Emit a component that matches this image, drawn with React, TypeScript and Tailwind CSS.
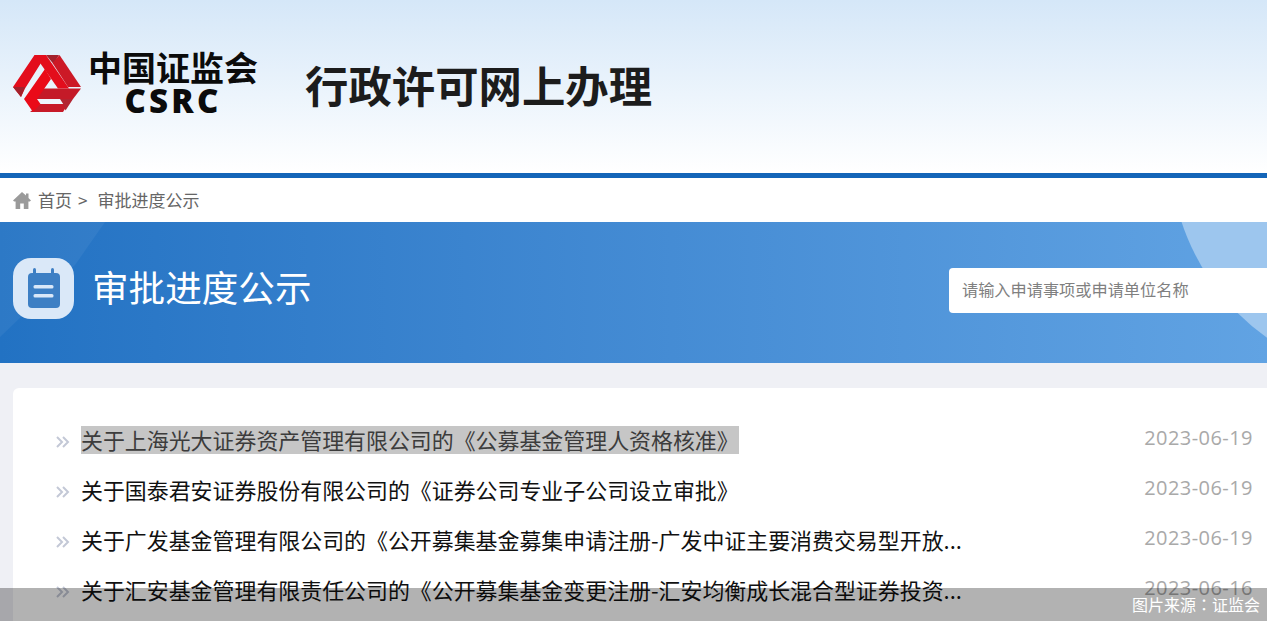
const ROWS = [
  { title: '关于上海光大证券资产管理有限公司的《公募基金管理人资格核准》', date: '2023-06-19', selected: true },
  { title: '关于国泰君安证券股份有限公司的《证券公司专业子公司设立审批》', date: '2023-06-19' },
  { title: '关于广发基金管理有限公司的《公开募集基金募集申请注册-广发中证主要消费交易型开放...', date: '2023-06-19' },
  { title: '关于汇安基金管理有限责任公司的《公开募集基金变更注册-汇安均衡成长混合型证券投资...', date: '2023-06-16' },
]

const CJK = "font-['Microsoft_YaHei','Noto_Sans_CJK_SC',sans-serif]"

function Logo() {
  return (
    <svg width="68" height="59" viewBox="0 0 68 59" className="shrink-0">
      {/* three folded bands, drawn back to front */}
      <path d="M33 1H46L40.5 10Z" fill="#a3212c" />
      <path d="M39.5 9 46.5 1 68 33H55Z" fill="#cc1926" />
      <path d="M25 34.5H68L60 45H20Z" fill="#c41a28" />
      <path d="M27 50H55L50 58H17Z" fill="#c71a28" />
      <path d="M47 45H60L52.5 56.5 50.5 50.5Z" fill="#b32431" />
      <path d="M21.5 1H33L56 34.5H45Z" fill="#e30d1c" />
      <path d="M21.5 1H33L12 34.5 8 43 0 33Z" fill="#e30d1c" />
      <path d="M0 33H12L8 43Z" fill="#a3212c" />
      <path d="M32 15 38 25 24 45 27.5 50 20 58 11 45Z" fill="#ea0a18" />
    </svg>
  )
}

function HomeIcon() {
  return (
    <svg width="18" height="17" viewBox="0 0 18 17" className="shrink-0">
      <path d="M9 0 13 3.6V1.5H15.5V6L18 8.4 16.8 9.6H15.4V17H10.8V11.5H7.2V17H2.6V9.6H1.2L0 8.4Z" fill="#9a9a9a" />
    </svg>
  )
}

function CalendarIcon() {
  return (
    <div className="flex h-[61px] w-[61px] shrink-0 items-center justify-center rounded-[18px] bg-[#dae8f8]">
      <svg width="34" height="40" viewBox="0 0 34 40">
        <rect x="1" y="5" width="32" height="35" rx="4" fill="#3d7fc4" />
        <rect x="6" y="0" width="3" height="9" rx="1.5" fill="#3d7fc4" />
        <rect x="24" y="0" width="3" height="9" rx="1.5" fill="#3d7fc4" />
        <rect x="6.5" y="17" width="20" height="3.5" rx="1.5" fill="#dae8f8" />
        <rect x="6.5" y="26" width="20" height="3.5" rx="1.5" fill="#dae8f8" />
      </svg>
    </div>
  )
}

function Row({ title, date, selected }: { title: string; date: string; selected?: boolean }) {
  return (
    <div className="flex h-[50px] items-center">
      <svg width="14" height="12" viewBox="0 0 14 12" className="mr-[11px] mt-[2px] shrink-0" fill="none" stroke="#c3c8d6" strokeWidth="2">
        <path d="M1 1 6 6 1 11M7 1 12 6 7 11" />
      </svg>
      <div className="mb-[2px] min-w-0 flex-1">
        <span className={selected ? 'inline-block bg-[#c6c6c6] leading-[28px] text-[#3c3c3c]' : 'inline-block leading-[28px] text-[#111111]'}>{title}</span>
      </div>
      <span className="mb-[6px] font-['Open_Sans',sans-serif] text-[20px] tracking-[0.45px] text-[#a9a9a9]">{date}</span>
    </div>
  )
}

export default function App() {
  return (
    <div className={`relative h-[621px] w-[1267px] overflow-hidden bg-[#eff0f5] ${CJK}`}>
      <header className="flex h-[173px] items-center bg-gradient-to-b from-[#d5e7f8] to-white pb-[7px] pl-[13px]">
        <Logo />
        <div className="ml-[7px] flex w-[170px] flex-col items-center">
          <span className="text-[34px] font-bold leading-[32px] text-[#0b0b0b]">中国证监会</span>
          <span className="mt-[4px] font-['Open_Sans',sans-serif] text-[33px] font-extrabold leading-[28px] tracking-[3.2px] text-[#0b0b0b]">CSRC</span>
        </div>
        <h1 className="ml-[47px] mt-[3px] text-[43.4px] font-bold text-[#1c1c1c]">行政许可网上办理</h1>
      </header>
      <div className="h-[5px] bg-[#1465b8]" />
      <nav className="flex h-[44px] items-center bg-white pl-[13px] text-[17px] text-[#666666]">
        <HomeIcon />
        <span className="ml-[7px]">首页</span>
        <span className="ml-[6px]">&gt;</span>
        <span className="ml-[10px]">审批进度公示</span>
      </nav>
      <section className="relative flex h-[141px] items-center overflow-hidden bg-gradient-to-r from-[#2272c3] to-[#61a3e3] pl-[13px]">
        <div className="absolute inset-0 bg-white/5 [clip-path:polygon(0_0,105px_0,75px_43px,0_115px)]" />
        <div className="absolute -right-[363px] -top-[302px] h-[460px] w-[460px] rounded-full bg-[#9dc6ee]" />
        <div className="relative mb-[9px] flex items-center">
          <CalendarIcon />
          <h2 className="mb-[1px] ml-[18px] text-[36.6px] font-normal text-white">审批进度公示</h2>
        </div>
        <div className="absolute left-[949px] top-[46px] flex h-[45px] w-[340px] items-center rounded-[4px] bg-white pb-[3px] pl-[13px] text-[16.2px] text-[#808080]">
          请输入申请事项或申请单位名称
        </div>
      </section>
      <main className="ml-[13px] mt-[25px] h-[300px] rounded-tl-[6px] bg-white pl-[43px] pr-[14px] pt-[28px] text-[21.93px]">
        {ROWS.map(row => <Row key={row.title} {...row} />)}
      </main>
      <div className="absolute inset-x-0 bottom-0 flex h-[33px] items-center justify-end bg-black/30 pb-[1px] pr-[7px] text-[16px] text-white">
        图片来源<span className="font-['Noto_Sans_CJK_TC',sans-serif]">：</span>证监会
      </div>
    </div>
  )
}
